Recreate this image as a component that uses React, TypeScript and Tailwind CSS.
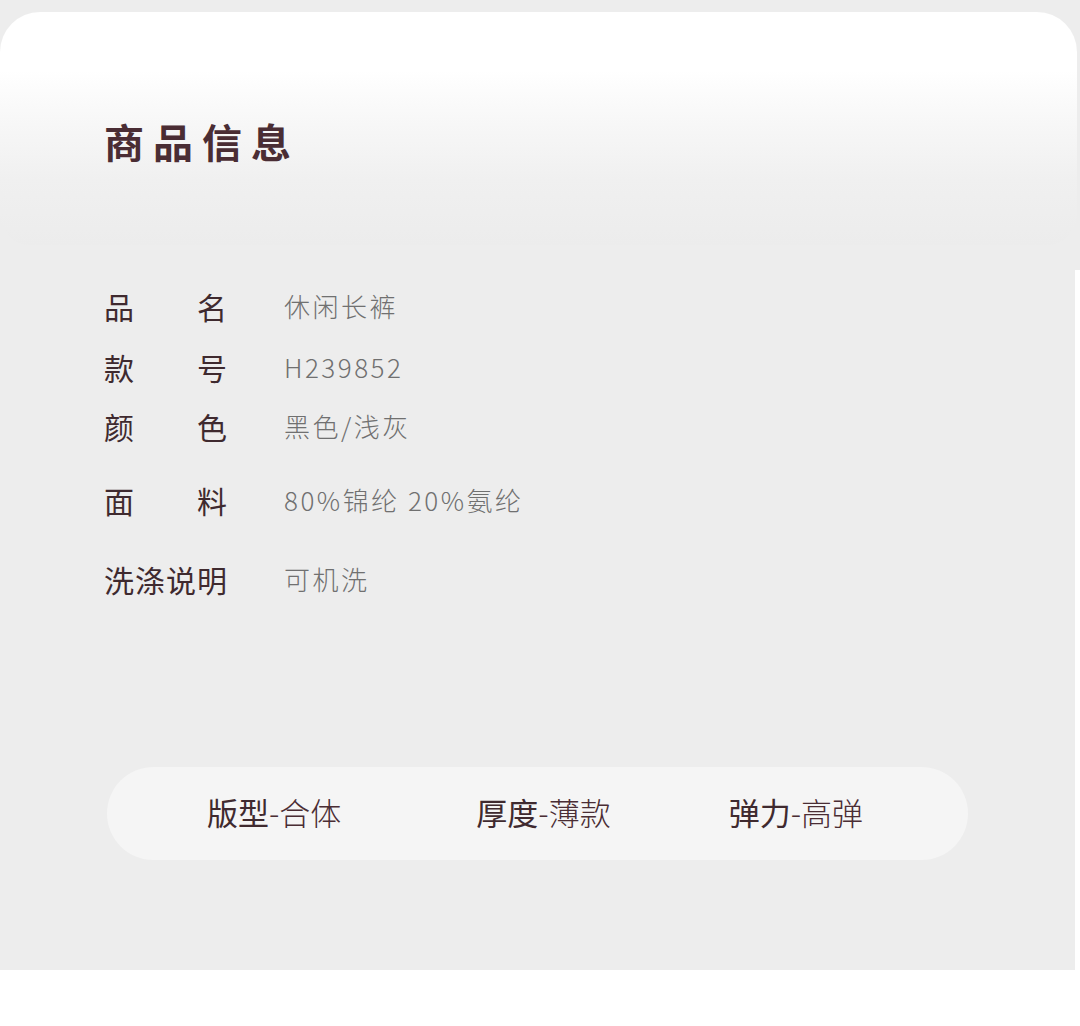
import React from 'react';

const rows = [
  { label: ['品', '名'], value: '休闲长裤', mt: 'mt-0' },
  { label: ['款', '号'], value: 'H239852', mt: 'mt-[29px]' },
  { label: ['颜', '色'], value: '黑色/浅灰', mt: 'mt-[27px]' },
  { label: ['面', '料'], value: '80%锦纶 20%氨纶', mt: 'mt-[42px]' },
  { label: ['洗', '涤', '说', '明'], value: '可机洗', mt: 'mt-[47px]' },
];

const specs = [
  { k: '版型', v: '合体' },
  { k: '厚度', v: '薄款' },
  { k: '弹力', v: '高弹' },
];

export default function App() {
  return (
    <div
      className="w-[1080px] h-[1026px] bg-white overflow-hidden"
      style={{ fontFamily: '"Noto Sans CJK SC", "Noto Sans", sans-serif' }}
    >
      {/* Header */}
      <div className="w-full h-[270px] bg-[#ededed] pt-[12px]">
        <div className="w-[1077px] h-[233px] rounded-t-[40px] rounded-b-[30px] bg-[linear-gradient(to_bottom,#ffffff_0%,#ffffff_25%,#f8f8f8_45%,#f0f0f0_72%,#ececec_100%)] pl-[104px] pt-[99px]">
          <h1 className="text-[40px] leading-[60px] font-bold tracking-[9px] text-[#4a2d34]">商品信息</h1>
        </div>
      </div>

      {/* Details */}
      <div className="w-[1075px] h-[700px] bg-[#ededed] pt-[20px]">
        <div className="pl-[104px]">
          {rows.map((r) => (
            <div key={r.value} className={`flex items-center h-[32px] ${r.mt}`}>
              <div className="w-[123px] flex justify-between text-[30px] leading-none text-[#3f2a2f]">
                {r.label.map((c, i) => (
                  <span key={i}>{c}</span>
                ))}
              </div>
              <div className="ml-[57px] text-[26px] leading-none font-light tracking-[2.5px] text-[#707070]">{r.value}</div>
            </div>
          ))}
        </div>

        {/* Spec pill */}
        <div className="ml-[107px] mt-[172px] w-[861px] h-[93px] rounded-full bg-[#f5f5f5] flex items-center pb-[4px]">
          {specs.map((s, i) => (
            <div
              key={s.k}
              className={`text-[31px] leading-none text-[#3f2a2f] ${i === 0 ? 'ml-[100px]' : i === 1 ? 'ml-[135px]' : 'ml-[118px]'}`}
            >
              <span className="font-normal">{s.k}</span>
              <span className="font-light text-[#4a2d34]">-{s.v}</span>
            </div>
          ))}
        </div>
      </div>
    </div>
  );
}
